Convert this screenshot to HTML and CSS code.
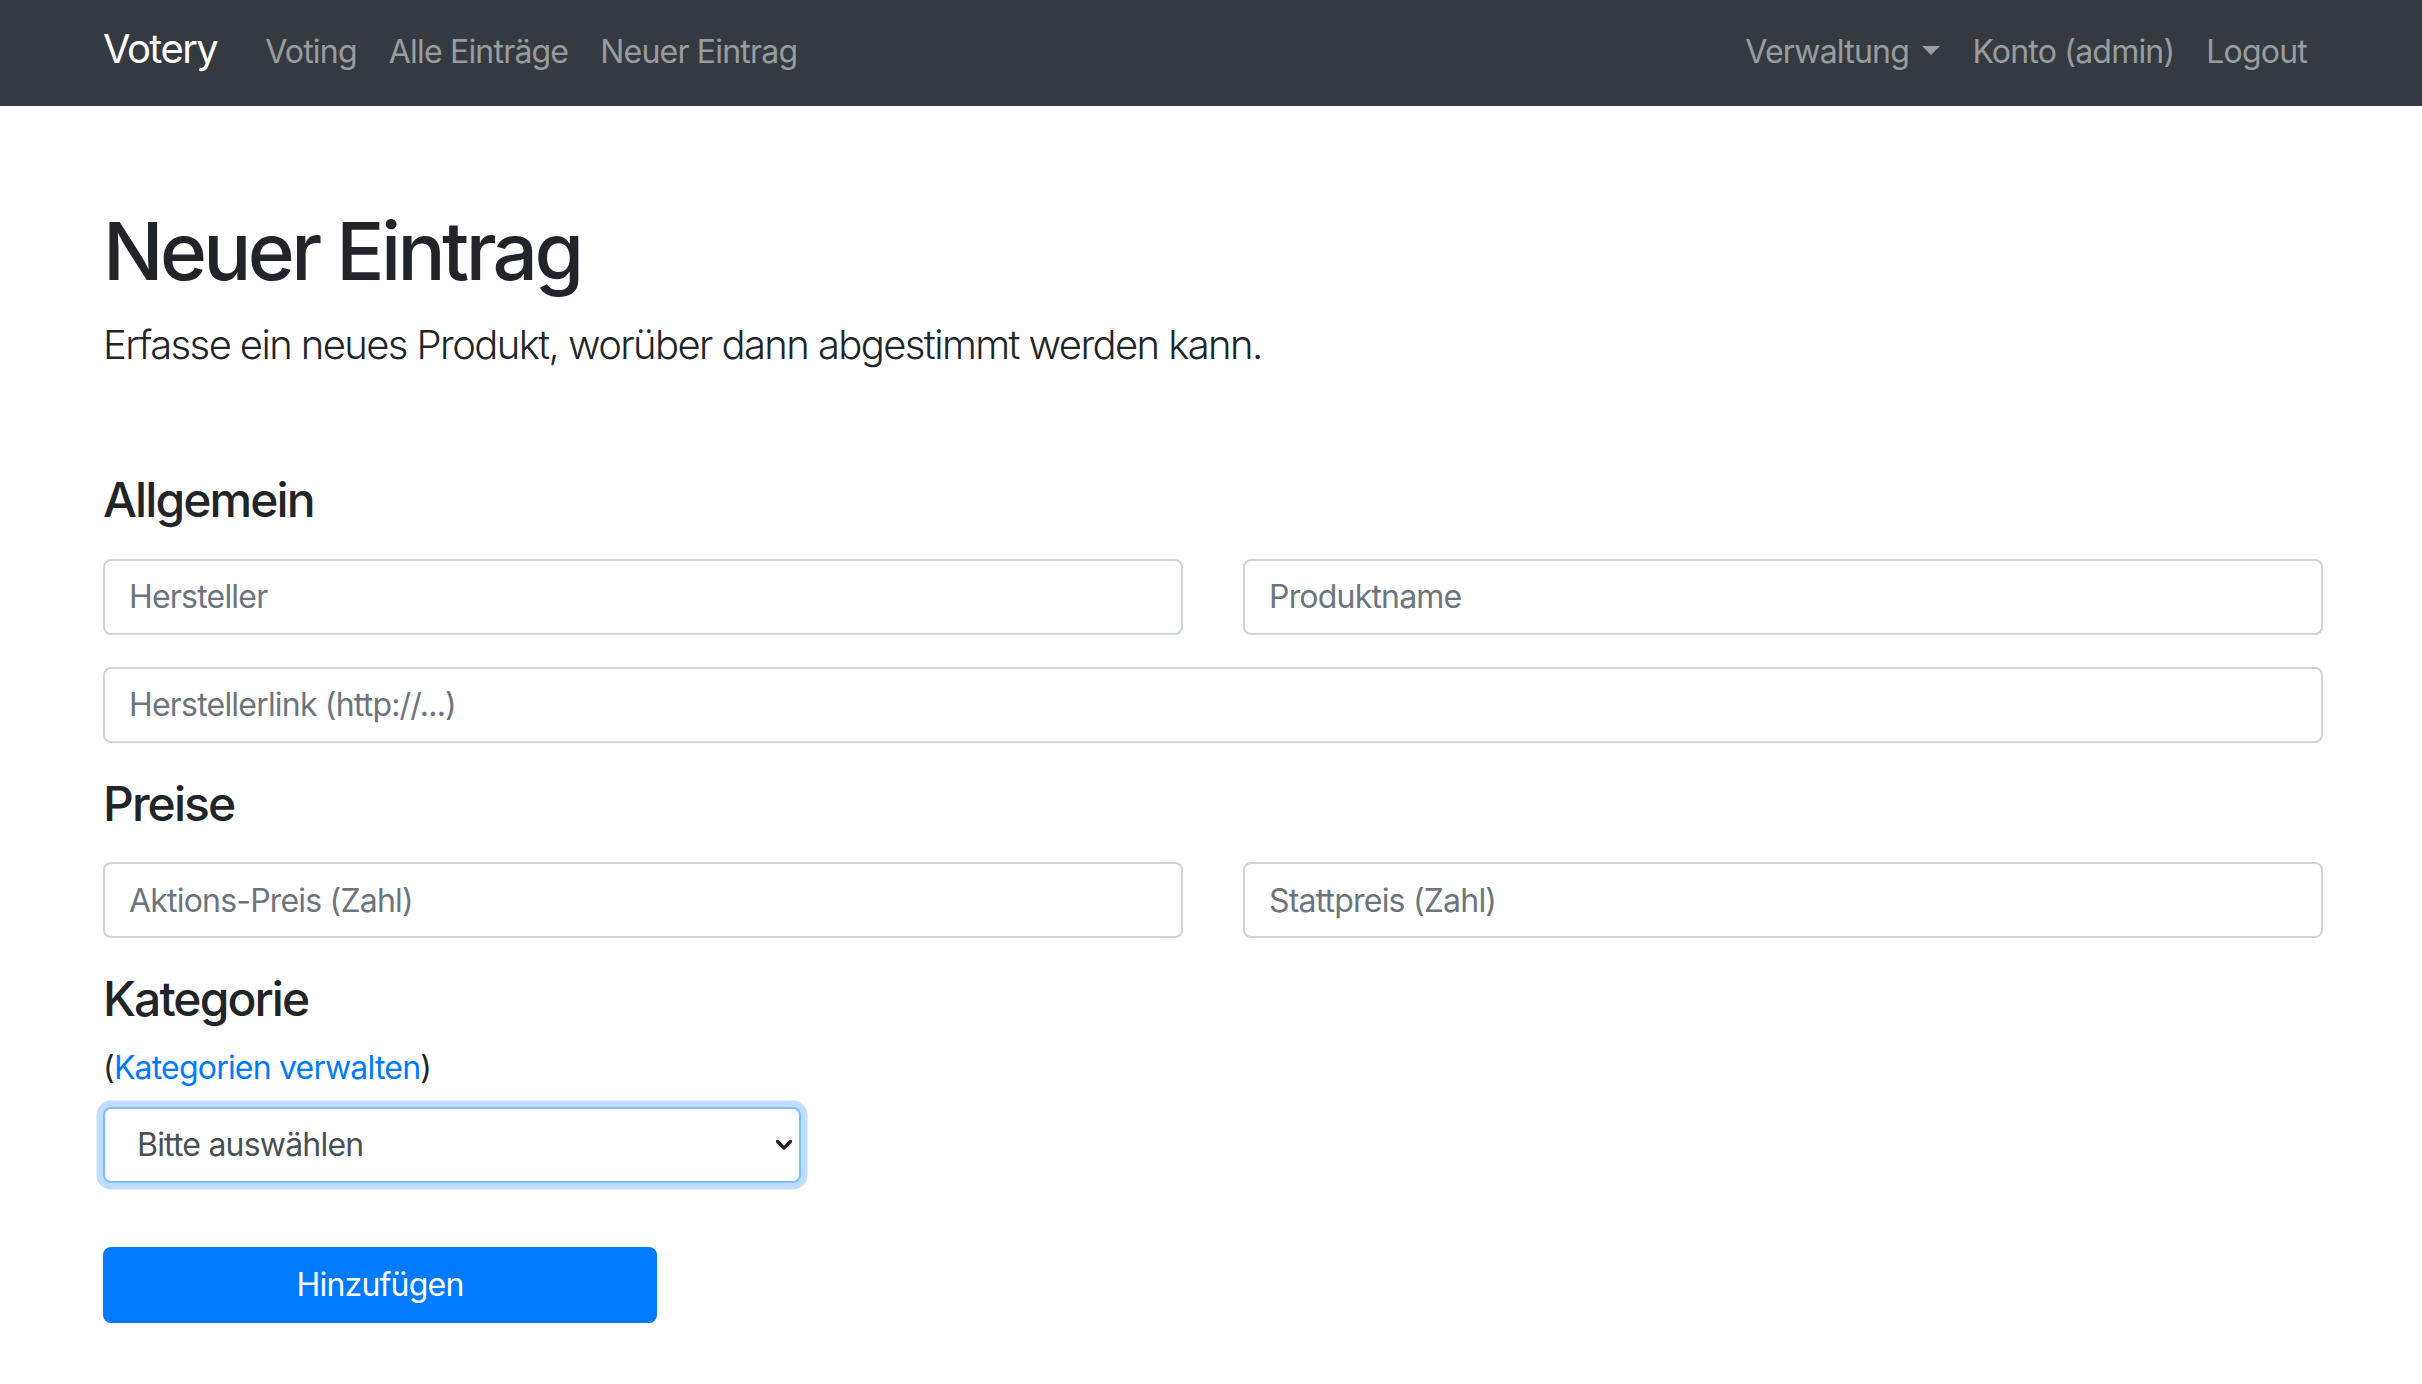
FILE: index.html
```html
<!DOCTYPE html>
<html lang="de">
<head>
<meta charset="utf-8">
<title>Votery – Neuer Eintrag</title>
<link rel="stylesheet" href="styles.css">
</head>
<body>
<nav class="navbar">
  <div class="nav-inner">
    <a class="brand" href="#">Votery</a>
    <ul class="nav-list">
      <li><a class="nav-link" href="#">Voting</a></li>
      <li><a class="nav-link" href="#">Alle Einträge</a></li>
      <li><a class="nav-link" href="#">Neuer Eintrag</a></li>
    </ul>
    <ul class="nav-list nav-right">
      <li><a class="nav-link dropdown-toggle" href="#">Verwaltung</a></li>
      <li><a class="nav-link" href="#">Konto (admin)</a></li>
      <li><a class="nav-link" href="#">Logout</a></li>
    </ul>
  </div>
</nav>
<main class="container">
  <h1 class="title">Neuer Eintrag</h1>
  <p class="lead">Erfasse ein neues Produkt, worüber dann abgestimmt werden kann.</p>
  <form class="entry-form">
    <h4 class="section-title">Allgemein</h4>
    <div class="form-row">
      <input class="form-control" type="text" placeholder="Hersteller">
      <input class="form-control" type="text" placeholder="Produktname">
    </div>
    <div class="form-row single">
      <input class="form-control" type="text" placeholder="Herstellerlink (http://...)">
    </div>
    <h4 class="section-title">Preise</h4>
    <div class="form-row">
      <input class="form-control" type="text" placeholder="Aktions-Preis (Zahl)">
      <input class="form-control" type="text" placeholder="Stattpreis (Zahl)">
    </div>
    <h4 class="section-title tight">Kategorie</h4>
    <p class="manage">(<a href="#">Kategorien verwalten</a>)</p>
    <div class="select-wrap">
      <select class="select">
        <option>Bitte auswählen</option>
      </select>
      <svg class="chevron" width="18" height="12" viewBox="0 0 18 12" aria-hidden="true">
        <path d="M2.5 2.5 L9 9 L15.5 2.5" fill="none" stroke="#222" stroke-width="3.2" stroke-linecap="round" stroke-linejoin="round"/>
      </svg>
    </div>
    <button class="btn-primary" type="button">Hinzufügen</button>
  </form>
</main>
</body>
</html>
```

FILE: styles.css
```css
* { box-sizing: border-box; }

html, body {
  margin: 0;
  padding: 0;
  background: #fff;
}

body {
  font-family: Inter, "Noto Sans", "Liberation Sans", sans-serif;
  font-size: 32px;
  line-height: 1.5;
  color: #212529;
  letter-spacing: -0.025em;
}

a { text-decoration: none; }

.navbar {
  background: #343a40;
  height: 106px;
  padding-top: 19px;
}

.nav-inner {
  width: 2220px;
  margin-left: 103px;
  display: flex;
  align-items: baseline;
}

.brand {
  color: #fff;
  font-size: 40px;
  line-height: 60px;
  margin-right: 32px;
  letter-spacing: -0.04em;
}

.nav-list {
  list-style: none;
  margin: 0;
  padding: 0;
  display: flex;
  align-items: baseline;
}

.nav-right { margin-left: auto; }

.nav-link {
  display: block;
  color: rgba(255, 255, 255, 0.5);
  padding: 0 16px;
  line-height: 48px;
}

.dropdown-toggle::after {
  content: "";
  display: inline-block;
  margin-left: 0.42em;
  vertical-align: 0.255em;
  border-top: 0.3em solid;
  border-right: 0.3em solid transparent;
  border-left: 0.3em solid transparent;
  border-bottom: 0;
}

.container {
  width: 2220px;
  margin-left: 103px;
  padding-top: 97px;
}

.title {
  font-size: 80px;
  font-weight: 500;
  line-height: 1.2;
  margin: 0 0 16px;
  letter-spacing: -0.045em;
}

.lead {
  font-size: 40px;
  font-weight: 300;
  line-height: 60px;
  margin: 0 0 32px;
  letter-spacing: -0.04em;
}

.entry-form {
  margin: 0;
  padding-top: 64px;
}

.section-title {
  font-size: 48px;
  font-weight: 500;
  line-height: 1.2;
  margin: 0 0 30px;
  letter-spacing: -0.04em;
}

.section-title.tight { margin-bottom: 16px; }

.form-row {
  display: grid;
  grid-template-columns: 1fr 1fr;
  column-gap: 60px;
  margin-bottom: 32px;
}

.form-row.single { grid-template-columns: 1fr; }

.form-control {
  display: block;
  width: 100%;
  height: 76px;
  padding: 12px 24px;
  font-family: inherit;
  font-size: 32px;
  line-height: 48px;
  letter-spacing: -0.025em;
  color: #495057;
  background: #fff;
  border: 2px solid #ced4da;
  border-radius: 8px;
  outline: none;
}

.form-control::placeholder { color: #6c757d; opacity: 1; }

.manage {
  margin: 0 0 15px;
  line-height: 48px;
}

.manage a { color: #007bff; }

.select-wrap {
  position: relative;
  width: 698px;
  margin-bottom: 64px;
}

.select {
  display: block;
  width: 100%;
  height: 76px;
  padding: 12px 50px 12px 32px;
  font-family: inherit;
  font-size: 32px;
  line-height: 48px;
  letter-spacing: -0.025em;
  color: #495057;
  background: #fff;
  border: 2px solid #80bdff;
  border-radius: 8px;
  box-shadow: 0 0 0 6.4px rgba(0, 123, 255, 0.25);
  -webkit-appearance: none;
  appearance: none;
  outline: none;
}

.chevron {
  position: absolute;
  right: 8px;
  top: 32px;
}

.btn-primary {
  display: block;
  width: 554px;
  height: 76px;
  padding: 12px 24px;
  font-family: inherit;
  font-size: 32px;
  line-height: 48px;
  letter-spacing: -0.025em;
  color: #fff;
  background: #007bff;
  border: 2px solid #007bff;
  border-radius: 8px;
  text-align: center;
}
```
